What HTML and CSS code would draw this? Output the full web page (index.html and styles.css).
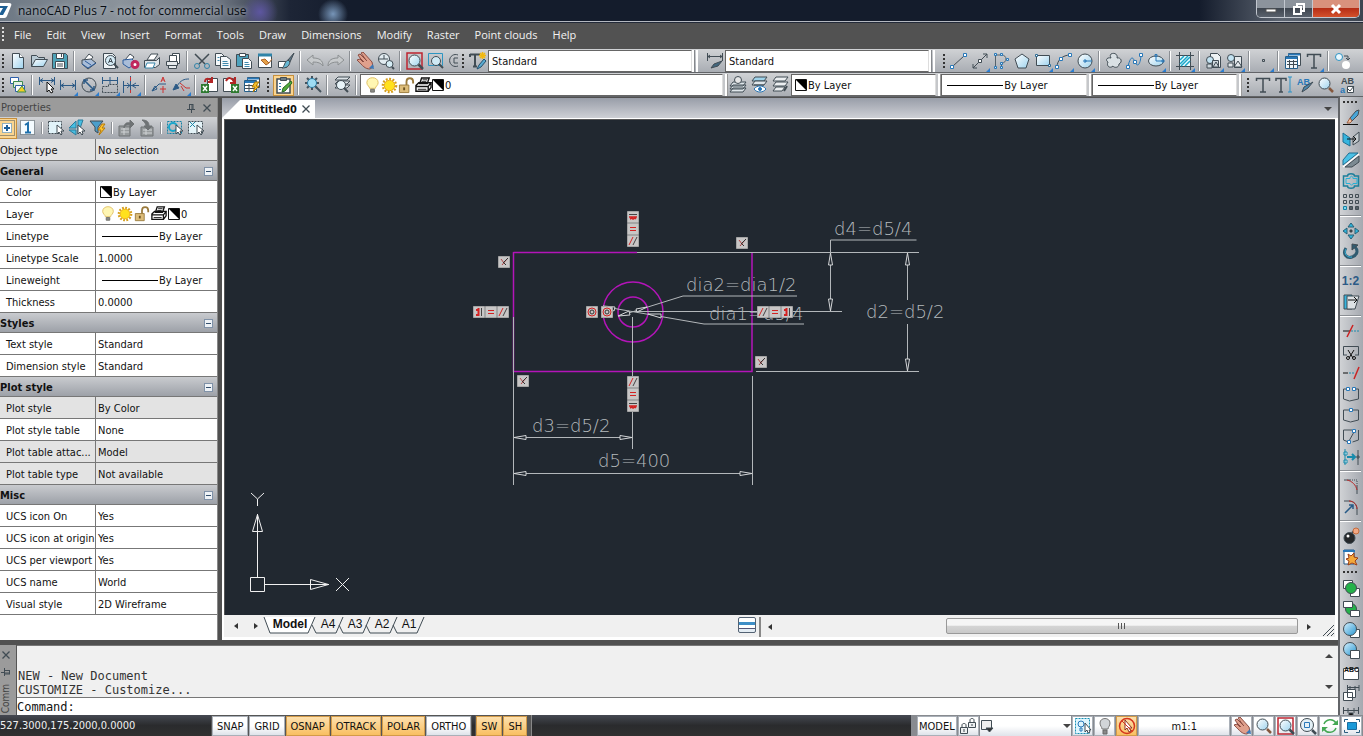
FILE: index.html
```
<!DOCTYPE html>
<html lang="en">
<head>
    <meta charset="UTF-8">
    <meta name="viewport" content="width=device-width, initial-scale=1.0">
    <title>nanoCAD Plus 7</title>
    <link rel="stylesheet" href="styles.css">
</head>
<body>
    <!-- Icon library -->
    <svg class="sprite" aria-hidden="true">
        <defs>
            <linearGradient id="glass" x1="0" y1="0" x2="1" y2="1"><stop offset="0" stop-color="#ffffff"/><stop offset="1" stop-color="#9ed3ee"/></linearGradient>
            <linearGradient id="sky" x1="0" y1="0" x2="1" y2="1"><stop offset="0" stop-color="#d8f2ff"/><stop offset="1" stop-color="#2795cf"/></linearGradient>
        </defs>
        <symbol id="new" viewBox="0 0 18 18"><path fill="url(#glass)" d="M3.5 1.5h7l4 4v11h-11z"/><path fill="#fff" d="M10.5 1.5v4h4"/></symbol>
        <symbol id="open" viewBox="0 0 18 18"><path fill="#b9cad4" d="M1.5 14.5v-11h5l2 2h6v3"/><path fill="url(#glass)" d="M1.5 14.5l4-7h12l-4 7z"/></symbol>
        <symbol id="save" viewBox="0 0 18 18"><path fill="#4fa3b8" d="M1.5 1.5h13l2 2v13h-15z"/><path fill="#fff" d="M5.5 1.5h7v5h-7zM4.500 9.500h9v7h-9z"/><path d="M6 12h6M6 14h6M10.500 2v3"/></symbol>
        <symbol id="print" viewBox="0 0 18 18"><path fill="#fff" d="M4 8L9 2l4 3-4 5z"/><path fill="#a9bdd8" d="M2 8l9-1 5 4-8 6-6-5z"/><path stroke="#2c5c9c" d="M2 12l6 4 8-5M5 9l6 4"/></symbol>
        <symbol id="preview" viewBox="0 0 18 18"><path fill="#eef3f6" d="M2.500 1.500h9l3 3v12h-12z"/><circle cx="9.500" cy="8.500" r="5" fill="#d6ecf6"/><path stroke-width="2" d="M13 12l4 4"/><path d="M7.500 11l2-5 2 5M8 9.500h3"/></symbol>
        <symbol id="plotset" viewBox="0 0 18 18"><path fill="#fff" d="M3 8l5-6 4 3-4 5z"/><path fill="#a9bdd8" stroke="#2c5c9c" d="M1 8l9-1 4 4-7 5-6-4z"/><circle cx="13" cy="12.500" r="3" fill="#fff" stroke="#c0265d" stroke-width="3"/></symbol>
        <symbol id="printer" viewBox="0 0 18 18"><path fill="#fff" d="M4 8L8 2h7l-4 6z"/><path fill="#dfe5e9" d="M1.500 8.500h12l3-3v7l-4 3h-11z"/><path fill="#fff" stroke="#3a89ad" d="M4 11h8l-2 5H2z"/></symbol>
        <symbol id="batch" viewBox="0 0 18 18"><path fill="#fff" d="M8.500 1.500h7v10h-7z"/><path fill="#fff" d="M5.500 3.500h7v10h-7z"/><path fill="#e5e9ec" d="M2.500 9.500h11v4h-11zM4.500 13.500h8v3h-8z"/></symbol>
        <symbol id="cut" viewBox="0 0 18 18"><path stroke-width="1.500" d="M2 2l10 10M16 2L6 12"/><circle cx="4" cy="14" r="2.500" stroke="#2f83a8"/><circle cx="14" cy="14" r="2.500" stroke="#2f83a8"/></symbol>
        <symbol id="copy" viewBox="0 0 18 18"><path fill="#f6f9fb" d="M1.500 1.500h6l3 3v9h-9z"/><path fill="#f6f9fb" d="M6.500 4.500h6l4 3v9h-10z"/><path stroke="#3f89ad" d="M8.500 9.500h5M8.500 11.500h6M8.500 13.500h6M3.500 5.500h2M3.500 8.500h2"/></symbol>
        <symbol id="paste" viewBox="0 0 18 18"><path fill="#4ea2bd" d="M1.500 2.500h12v12h-12z"/><path fill="#fff" d="M4.500 1.500h6v3h-6zM7.500 6.500h6l3 3v7h-9z"/><path stroke="#3f89ad" d="M9.500 10.500h4M9.500 12.500h5M9.500 14.500h5"/></symbol>
        <symbol id="pasteblock" viewBox="0 0 18 18"><path fill="#fff" d="M2.500 2.500h13v13h-13z"/><path stroke="#2f83a8" stroke-width="3" d="M2 3h14"/><path fill="#e5a047" stroke="#a9642b" d="M5 8l5 5 3-2-4-4zM13 11l3-4"/></symbol>
        <symbol id="brush" viewBox="0 0 18 18"><path fill="#fff" d="M1.500 9.500h8v6h-8z"/><path fill="#5c7687" d="M17 1l-6 7 2 2z"/><path fill="#67b7d3" d="M11 8l2 2c-1 5-4 6-8 6 3-2 2-6 6-8z"/></symbol>
        <symbol id="undo" viewBox="0 0 18 18"><path fill="#c7cacc" stroke="#8c9092" d="M1 8l6-5v3c6 0 10 2 10 8-2-3-5-4-10-4v3z"/></symbol>
        <symbol id="redo" viewBox="0 0 18 18"><path fill="#c7cacc" stroke="#8c9092" d="M17 8l-6-5v3C5 6 1 8 1 14c2-3 5-4 10-4v3z"/></symbol>
        <symbol id="hand" viewBox="0 0 18 18"><path fill="#e0a08c" stroke="#8b4d43" d="M1 8l3-1 3 3-5-7 2-1 6 6-5-7 2-1 9 10 1 5-3 2c-5 0-7-3-13-9z"/><path stroke="#8b4d43" d="M8 10l-4-4M11 9L6 4"/><path fill="#3a78b8" stroke="none" d="M13 16l4-4 1 5z"/></symbol>
        <symbol id="zoomrt" viewBox="0 0 18 18"><circle cx="7" cy="7" r="5.500" fill="#e2ecf1"/><path d="M7 3v4h4M2 7h5"/><circle cx="12.500" cy="12" r="3.500" fill="#d6edf5"/><path stroke-width="2" d="M15 15l2 2"/></symbol>
        <symbol id="zoomred" viewBox="0 0 18 18"><path stroke="#bd2430" stroke-width="1.500" d="M1 1h15v16H1z"/><circle cx="8.500" cy="8.500" r="5.500" fill="url(#glass)"/><path stroke-width="2.500" d="M12.500 12.500l4.500 4.500"/></symbol>
        <symbol id="zoomwin" viewBox="0 0 18 18"><path stroke="#2d96c2" d="M1.500 1.500h14v12h-14z"/><circle cx="9" cy="9" r="4.500" fill="#cfe9f4"/><path stroke-width="2" d="M12 12l4 4"/></symbol>
        <symbol id="zoomc" viewBox="0 0 18 18"><path d="M12 3a6 6 0 1 0 0 11M12 6H8v5h4"/></symbol>
        <symbol id="textstyle" viewBox="0 0 18 18"><path stroke-width="2" d="M1 2.500h10M6 3v11M4 14.500h4M1 2v3"/><path fill="#5aaad0" stroke="#24506d" d="M15 7l2 2-5 6-4 2 2-4z"/><path stroke="#f2b90f" stroke-width="1.500" d="M13.500 0v7M10 3.500h7M11 1l5 5M16 1l-5 5"/></symbol>
        <symbol id="dimstyle" viewBox="0 0 18 18"><path d="M1.500 1v8M16.500 1v8M2 4.500h14M4 3L2 4.500 4 6M14 3l2 1.500L14 6"/><path fill="#42677e" d="M16 9l-4 5-7 2 3-4z"/></symbol>
        <symbol id="line" viewBox="0 0 18 18"><path d="M3 14L14 4"/><path fill="#fff" stroke="#2878b9" d="M.5 13.500h3v3h-3zM13.500 1.500h3v3h-3z"/></symbol>
        <symbol id="ray" viewBox="0 0 18 18"><path d="M2 16L16 2M2 12v4h4M12 2h4v4"/><path fill="#fff" d="M7.500 7.500h3v3h-3z"/></symbol>
        <symbol id="pline" viewBox="0 0 18 18"><path stroke="#56636b" d="M3.500 15V3h6c6 0 6 8 0 8v4"/><path fill="#d5edf9" stroke="#2878b9" d="M2.500 1.500h2v2h-2zM8.500 1.500h2v2h-2zM14.500 6.500h2v2h-2zM8.500 10.500h2v2h-2zM2.500 14.500h2v2h-2zM8.500 14.500h2v2h-2z"/></symbol>
        <symbol id="polygon" viewBox="0 0 18 18"><path fill="url(#glass)" d="M9 2l7 5-3 9H5L2 7z"/></symbol>
        <symbol id="rect" viewBox="0 0 18 18"><path fill="url(#glass)" d="M2.500 3.500h13v10h-13z"/><path fill="#fff" stroke="#2e6c95" d="M1.500 2.500h2v2h-2zM14.500 12.500h2v2h-2z"/></symbol>
        <symbol id="arc" viewBox="0 0 18 18"><path d="M2 15C2 8 8 3 15 3"/><path fill="#fff" stroke="#2878b9" d="M.5 13.500h3v3h-3zM4.500 5.500h3v3h-3zM13.500 1.500h3v3h-3z"/></symbol>
        <symbol id="circle" viewBox="0 0 18 18"><circle cx="9" cy="9" r="7" fill="url(#glass)"/><path stroke="#2878b9" d="M9 9h7M8 8h2v2H8z"/></symbol>
        <symbol id="cloud" viewBox="0 0 18 18"><path fill="#d9e0e4" d="M6 2c4-2 7 1 6 4 4-1 6 4 2 6 0 4-5 4-6 2-3 3-7 0-5-4-3-2-1-5 3-4-1-2-1-3 0-4z"/></symbol>
        <symbol id="spline" viewBox="0 0 18 18"><path stroke="#2878b9" d="M2 14c3-11 5-9 7-4s5 4 6-6"/><path fill="#fff" stroke="#2878b9" d="M.5 13.500h3v3h-3zM7.500 8.500h3v3h-3zM13.500 1.500h3v3h-3z"/></symbol>
        <symbol id="ellipse" viewBox="0 0 18 18"><ellipse cx="9" cy="9" rx="7.500" ry="5" fill="url(#glass)"/><path stroke="#2878b9" d="M9 4v5h7M8 2.500h2v2H8zM15 8h2v2h-2z"/></symbol>
        <symbol id="hatch" viewBox="0 0 18 18"><path fill="#e9fbff" d="M3.500 3.500h11v11h-11zM3.500 0v18M14.500 0v18M0 3.500h18M0 14.500h18"/><path stroke="#1aa6c9" stroke-width="1.500" d="M4 8l4-4M4 12l8-8M5 14l9-9M9 14l5-5"/></symbol>
        <symbol id="blockins" viewBox="0 0 18 18"><path fill="#eef2f4" d="M5.500 1.500h7l3 3v11h-10z"/><circle cx="5" cy="8" r="3.500" fill="#c3e3f2"/><path fill="#cfd8dd" d="M7.500 8.500h6v7h-6zM2 12h5v4H2zM8 15l3-5 3 5z"/></symbol>
        <symbol id="blockdef" viewBox="0 0 18 18"><circle cx="5" cy="6" r="3.500" fill="#c3e3f2"/><path fill="#e4e9ec" d="M8.500 4.500h7v11h-7zM2 11h5v4H2zM8 15l4-6 4 6z"/></symbol>
        <symbol id="point" viewBox="0 0 18 18"><path d="M7.500 7.500h2v2h-2z"/></symbol>
        <symbol id="table" viewBox="0 0 18 18"><path fill="#fff" d="M4.500 1.500h12v12h-12z"/><path fill="#f2f7fa" stroke="#245e89" d="M1.500 4.500h12v12h-12z"/><path stroke="#2878b9" stroke-width="2" d="M4 2.500h12M2 6h11"/><path d="M3 9.500h10M3 12.500h10M5.500 8v8M9.500 8v8"/></symbol>
        <symbol id="text" viewBox="0 0 18 18"><path stroke-width="1.500" d="M2.500 5V2.500h13V5M9 2.500V16M6 16h6"/></symbol>
        <symbol id="swap" viewBox="0 0 18 18"><circle cx="5" cy="5" r="3.500" fill="#e9f8ff" stroke="#2e93c3"/><circle cx="12" cy="13" r="4" fill="#fff" stroke="none"/><path d="M10 4h4v4M12 6l2 2 2-2"/></symbol>
        <symbol id="layers" viewBox="0 0 18 18"><path fill="#fff" stroke="#2d5faa" d="M1.500 1.500h8v6h-8z"/><path fill="#e4f1e4" stroke="#3b8b50" d="M4.500 5.500h9v6h-9z"/><path fill="#fff" stroke="#2d5faa" d="M6.500 9.500h9v6h-9z"/><path fill="#f4d024" stroke="#3b8b50" d="M8 16l5-6 4 6z"/></symbol>
        <symbol id="dimauto" viewBox="0 0 18 18"><path stroke="#2c5a86" d="M1.500 1v8M16.500 1v8M2 4.500h14M5 2.500l-3 2 3 2M13 2.500l3 2-3 2"/><path fill="#fff" stroke="#111" d="M9 6v10l2-2 2 3 2-1-2-3h3z"/></symbol>
        <symbol id="dimlin" viewBox="0 0 18 18"><path stroke="#2c5a86" d="M1.500 4v10M16.500 4v10M2 9.500h14M5 7.500l-3 2 3 2M13 7.500l3 2-3 2"/></symbol>
        <symbol id="dimdia" viewBox="0 0 18 18"><circle cx="9" cy="9" r="7"/><path stroke="#2c5a86" stroke-width="1.500" d="M4 4l10 10M4 8V4h4M10 14h4v-4"/></symbol>
        <symbol id="dimcont" viewBox="0 0 18 18"><path stroke="#2c5a86" d="M1.500 1v7M9 1v7M16.500 1v7M2 4.500h14"/><path stroke-dasharray="2 1" d="M1.500 16.500v-6h6v-2h9v8z"/></symbol>
        <symbol id="dimbrk" viewBox="0 0 18 18"><path stroke="#2c5a86" d="M8.500 0v17M1.500 5v12M1 9.500h16M5 7l3 2.500L5 12M14 7l-4 2.500 4 2.500"/><path stroke="#c33" d="M8.500 1v4M8.500 14v3"/></symbol>
        <symbol id="leadera" viewBox="0 0 18 18"><path stroke="#2c5a86" d="M1 15l7-7h7M1 15l5-2-2-3z"/><path stroke="#c33" d="M10 6l2-5 2 5M11 4h2M12 10v7M9 13h6"/></symbol>
        <symbol id="leader" viewBox="0 0 18 18"><path fill="#2c5a86" stroke="#2c5a86" d="M1 14l6-2-3-4z"/><path stroke="#2c5a86" d="M5 10c4-6 7-7 12-7"/><path stroke="#c33" d="M8 7l6 5h4M9 10l3 5"/></symbol>
        <symbol id="xlsin" viewBox="0 0 18 18"><path fill="#fff" d="M6.500 2.500h10v13h-10z"/><path fill="#2e7a30" stroke="none" d="M0 8h8v9H0z"/><path stroke="#fff" stroke-width="1.500" d="M2 10l4 5M6 10l-4 5"/><path stroke="#b32626" stroke-width="2" d="M4 6c0-4 3-4 7-1M11 1v5H7"/></symbol>
        <symbol id="xlsout" viewBox="0 0 18 18"><path fill="#fff" d="M1.500 2.500h10v13h-10z"/><path fill="#2e7a30" stroke="none" d="M9 8h8v9H9z"/><path stroke="#fff" stroke-width="1.500" d="M11 10l4 5M15 10l-4 5"/><path stroke="#b32626" stroke-width="2" d="M4 5c2-4 6-4 8 1M13 1v6H8"/></symbol>
        <symbol id="tableedit" viewBox="0 0 18 18"><path fill="#fff" d="M4.500 1.500h12v10h-12z"/><path fill="#fff" stroke="#245e89" d="M1.500 4.500h12v11h-12z"/><path stroke="#2878b9" stroke-width="2" d="M4 2.500h12M2 6h11"/><path d="M2 9.500h11M2 12.500h11M6 8v7"/><path fill="#f6c12a" stroke="#a87408" d="M12 6l-3 5h3l-2 5 6-6h-3l3-4z"/></symbol>
        <symbol id="clipboard" viewBox="0 0 18 18"><path fill="#fff" stroke-width="1.500" d="M2 3h13v14H2z"/><path fill="#6a7a84" d="M5.500 1.500h6v3h-6z"/><path stroke="#2c79b0" d="M4 7.500h2M4 10.500h2M4 13.500h2"/><path fill="#52ab3f" stroke="#2a6a20" d="M16 5l1 2-7 8-3 1 1-4z"/></symbol>
        <symbol id="gear" viewBox="0 0 18 18"><path stroke="#44525c" stroke-width="2" d="M8 0v14M1 7h14M3 2l10 10M13 2L3 12"/><circle cx="8" cy="7" r="4.500" fill="#9edcf3" stroke="#2c79a0"/><path stroke="#44525c" stroke-width="2" d="M12 11l5 5"/></symbol>
        <symbol id="layermag" viewBox="0 0 18 18"><path fill="#dde3e7" d="M5 1h12l-3 3H2zM5 5h12l-3 3H2zM5 9h12l-3 3H2z"/><circle cx="8" cy="9" r="4.500" fill="#e8f4f9"/><path stroke-width="2" d="M11 12l4 4"/></symbol>
        <symbol id="layprev" viewBox="0 0 18 18"><path fill="#dfe6ea" d="M4 12h13l-3 4H1zM4 9h13l-3 4H1zM4 6h13l-3 4H1z"/><circle cx="9" cy="4" r="3.500" fill="#e6e6e6"/></symbol>
        <symbol id="layiso" viewBox="0 0 18 18"><path fill="#9fd3ea" d="M5 1h12l-3 4H2z"/><path fill="#dfe6ea" d="M5 5h12l-3 4H2zM4 9h10"/><path fill="#fff" stroke="#2674b5" d="M4 13c3-4 9-4 12 0-3 4-9 4-12 0z"/><circle cx="10" cy="13" r="1.500" fill="#2674b5" stroke="#2674b5"/></symbol>
        <symbol id="layst" viewBox="0 0 18 18"><path fill="#eceff1" d="M5 1h12l-3 4H2zM5 6h12l-3 4H2zM5 11h9l-3 4H2z"/><path stroke-width="2" d="M13 15l3-5"/></symbol>
        <symbol id="bulb" viewBox="0 0 18 18"><path fill="#fff6b3" stroke="#dfbf62" d="M6 12c0-2-3-3-3-6 0-7 12-7 12 0 0 3-3 4-3 6z"/><path fill="#8c8c86" stroke="#6d6d68" d="M7 13h4v3H7z"/></symbol>
        <symbol id="sun" viewBox="0 0 18 18"><circle cx="9" cy="9" r="7" stroke="#d59f1d" stroke-width="2.500" stroke-dasharray="2 1.600"/><circle cx="9" cy="9" r="5.500" fill="#ffe11c" stroke="#eba913"/></symbol>
        <symbol id="lock" viewBox="0 0 18 18"><path stroke="#9a7a3c" stroke-width="2" d="M9 9V5c0-5 7-5 7 0v2"/><path fill="#dcbc79" stroke="#9a7a3c" d="M1.500 8.500h10v8h-10z"/><path stroke="#6b5220" stroke-width="2" d="M6.500 11v3"/></symbol>
        <symbol id="plot" viewBox="0 0 18 18"><path fill="#fff" stroke="#111" stroke-width="1.500" d="M5 7l2-6h8l-2 6zM1 9l3-3h13l-3 4v5H1zM14 15l3-4V6M1 10h13"/><path stroke="#111" d="M8 3h5M7 5h5M3 13h9"/></symbol>
        <symbol id="swatch" viewBox="0 0 12 12"><path fill="#fff" stroke="#111" d="M.5.500h11v11H.5z"/><path fill="#000" stroke="none" d="M1 1h10v10z"/></symbol>
        <symbol id="textcur" viewBox="0 0 18 18"><path stroke-width="1.500" d="M1 5V2.500h10V5M6 2.500V16M4 16h4"/><path stroke="#2b93c8" d="M15 1v15M13 1h4M13 16h4"/></symbol>
        <symbol id="mag" viewBox="0 0 18 18"><circle cx="7.500" cy="7.500" r="5.500" fill="url(#glass)"/><path stroke="#85573d" stroke-width="2.500" d="M12 12l4 4"/></symbol>
        <symbol id="plusbox" viewBox="0 0 18 18"><path stroke-dasharray="1 1" d="M1.500 1.500h15v15h-15z"/><path fill="#fff" stroke="#2878b9" stroke-dasharray="1 1" d="M4.500 4.500h9v9h-9z"/><path stroke="#1d5f99" stroke-width="2" d="M9 6v6M6 9h6"/></symbol>
        <symbol id="onebox" viewBox="0 0 18 18"><path fill="#f4fbff" stroke-dasharray="1 1" d="M1.500 1.500h14v14h-14z"/><path stroke="#1e70ac" stroke-width="2" d="M6 6l3-2v9M6 13.500h6"/></symbol>
        <symbol id="selbox" viewBox="0 0 18 18"><path fill="#e2f4fa" stroke-dasharray="2 1" d="M1.500 2.500h13v12h-13z"/><path fill="#fff" d="M10 6v9l2-2 2 3 1-1-1-3h3z"/></symbol>
        <symbol id="selsim" viewBox="0 0 18 18"><path fill="#47bfe2" stroke="#2c7c9c" d="M1 9l7-7v7zM10 1v14l5-14zM1 11h7v5z"/><path fill="#fff" d="M10 6v9l2-2 2 3 1-1-1-3h3z"/></symbol>
        <symbol id="filter" viewBox="0 0 18 18"><path fill="#4a9fcb" d="M1 2h13L9 8v6l-3-2V8z"/><path fill="#ffc52e" stroke="#b57a08" d="M13 5l-4 6h3l-2 5 6-7h-3l3-4z"/></symbol>
        <symbol id="exp" viewBox="0 0 18 18"><path fill="#969a9c" stroke="#6f7375" d="M2 7h11v10H2z"/><path stroke="#d0d3d5" d="M4 10h8M4 13h8M7 9v7"/><path fill="#6f7375" stroke="#6f7375" d="M7 9c0-4 2-6 6-5V1l4 4-4 4V6c-3-1-5 0-6 3z"/></symbol>
        <symbol id="imp" viewBox="0 0 18 18"><path fill="#969a9c" stroke="#6f7375" d="M3 8h12v9H3z"/><path stroke="#d0d3d5" d="M5 11h9M5 14h9M8 10v6"/><path fill="#6f7375" stroke="#6f7375" d="M4 1c5 0 7 2 7 6h3l-4 4-4-4h2c0-3-2-4-4-6z"/></symbol>
        <symbol id="selin" viewBox="0 0 18 18"><path stroke="#1682a6" d="M1.500 2.500h14v12h-14z" stroke-dasharray="2 1"/><circle cx="7" cy="8" r="4" stroke="#1ba6cb" stroke-width="2"/><path fill="#fff" d="M10 6v9l2-2 2 3 1-1-1-3h3z"/></symbol>
        <symbol id="selx" viewBox="0 0 18 18"><path fill="#e4f3f8" stroke-dasharray="2 1" d="M1.500 2.500h14v12h-14z"/><path stroke="#1f85a4" d="M3 3l5 5M8 3L3 8"/><path fill="#fff" d="M10 6v9l2-2 2 3 1-1-1-3h3z"/></symbol>
        <symbol id="erase" viewBox="0 0 18 18"><path stroke="#111" d="M1 15.500h15"/><path fill="#47a5d8" d="M8 9l6-7 3-1-1 5-6 6z"/><path fill="#f1c0a0" stroke="#9b6045" d="M8 9l2 3-2 2H5z"/></symbol>
        <symbol id="mirrorc" viewBox="0 0 18 18"><path fill="#35b5df" stroke="#216f91" d="M1 3l7 5v8l-7-4z"/><path fill="#c3c9cd" d="M17 2l-6 5v8l6-4z"/><path stroke="#111" d="M5 9h9M11 6l3 3-3 3"/></symbol>
        <symbol id="mirror" viewBox="0 0 18 18"><path fill="#4cc1e6" stroke="#216f91" d="M7 2h9L1 14V9z"/><path fill="#7c8a92" d="M17 5v6l-7 5H3z"/><path stroke="#fff" stroke-width="1.500" d="M1 16L17 3"/></symbol>
        <symbol id="offset" viewBox="0 0 18 18"><path stroke="#1d7f9b" stroke-width="1.500" d="M1.500 4h4c0-3 7-3 7 0h4v10h-4c0 3-7 3-7 0h-4z"/><path d="M4 6.500h4c0-3 3-3 3 0h4v5h-4c0 2-3 2-3 0H4z" stroke="#23b3d9"/></symbol>
        <symbol id="array" viewBox="0 0 18 18"><path d="M1.500 1.500h3v3h-3zM7.500 1.500h3v3h-3zM13.500 1.500h3v3h-3zM1.500 7.500h3v3h-3zM7.500 7.500h3v3h-3zM13.500 7.500h3v3h-3z"/><path fill="#555f66" d="M7.500 13.500h3v3h-3zM13.500 13.500h3v3h-3z"/><path fill="#7ed8f1" stroke="#1682a6" d="M1.500 13.500h3v3h-3z"/></symbol>
        <symbol id="move" viewBox="0 0 18 18"><path fill="#2cb5de" stroke="#2b6075" d="M9 1l3 4H6zM9 17l3-4H6zM1 9l4-3v6zM17 9l-4-3v6z"/><path d="M8 8h2v2H8z" fill="#333"/></symbol>
        <symbol id="rotate" viewBox="0 0 18 18"><path stroke="#315b70" stroke-width="3" d="M4 5c-4 6 1 11 6 9 6-2 6-7 3-10"/><path fill="#315b70" d="M10 1v6l6-5z"/><path stroke="#38b5dd" d="M4 6c-3 5 2 9 6 8"/></symbol>
        <symbol id="stretch" viewBox="0 0 18 18"><path fill="#35b5df" d="M2 2h8v14H2z"/><path fill="#dde2e5" d="M5 3h12l-4 13H5z"/><path stroke="#111" d="M6 7h8M12 4l3 3-3 3"/></symbol>
        <symbol id="trim" viewBox="0 0 18 18"><path d="M1 9h7" stroke="#111"/><path stroke="#1d8aad" stroke-dasharray="2 1" d="M9 9h8"/><path stroke="#c22" stroke-width="1.500" d="M5 15l6-12"/></symbol>
        <symbol id="scissor" viewBox="0 0 18 18"><path d="M1.500 12V3.500h15V12M1 12h4M13 12h4"/><path stroke="#111" d="M6 7l5 8M12 7l-5 8"/><circle cx="6" cy="15" r="1.500" stroke="#111"/><circle cx="12" cy="15" r="1.500" stroke="#111"/></symbol>
        <symbol id="extend" viewBox="0 0 18 18"><path stroke="#111" d="M1 9h5"/><path stroke="#1d8aad" stroke-dasharray="2 1" d="M7 9h6"/><path stroke="#c22" stroke-width="1.500" d="M12 15l5-12"/></symbol>
        <symbol id="brk" viewBox="0 0 18 18"><path d="M4 4H1.500v10l6 2 9-2V4H14"/><path fill="#fff" stroke="#2878b9" d="M4.500 2.500h3v3h-3zM10.500 2.500h3v3h-3z"/></symbol>
        <symbol id="brkpt" viewBox="0 0 18 18"><path d="M1.500 4h15v10l-8 2-7-2z"/><path fill="#fff" stroke="#2878b9" d="M7.500 2.500h3v3h-3z"/></symbol>
        <symbol id="join" viewBox="0 0 18 18"><path d="M10 3H1.500v10l5 2M16.500 3v10l-6 2M7 14l5-9"/><path fill="#fff" stroke="#2878b9" d="M5.500 13.500h3v3h-3zM10.500 2.500h3v3h-3z"/></symbol>
        <symbol id="align" viewBox="0 0 18 18"><path stroke="#168aab" d="M3 1v16M2 4h3v3H2zM2 12h3v3H2z" fill="#fff"/><path stroke="#168aab" stroke-width="2" d="M5 9h8M10 6l3 3-3 3"/><path d="M16 2v15M15 8h2v2h-2z"/></symbol>
        <symbol id="chamfer" viewBox="0 0 18 18"><path d="M2 3h6M15 9v8"/><path stroke-dasharray="1 1" d="M8 3h7v6"/><path stroke="#b92929" d="M5 3c5 1 9 5 10 10"/></symbol>
        <symbol id="fillet" viewBox="0 0 18 18"><path d="M2 3h5c5 0 8 4 8 8v6"/><path stroke="#b92929" d="M7 3c5 0 8 4 8 8"/><path stroke="#275b88" stroke-width="1.500" d="M3 15l8-8M7 7h4v4"/></symbol>
        <symbol id="bomb" viewBox="0 0 18 18"><circle cx="7.500" cy="11" r="5.500" fill="#25282a"/><path stroke-width="2" d="M10 6l3-3"/><circle cx="14" cy="4" r="3" fill="#f2a884" stroke="#c46b3c"/><circle cx="6" cy="9" r="1.500" fill="#fff" stroke="none"/></symbol>
        <symbol id="burst" viewBox="0 0 18 18"><path fill="#fff" stroke="#275b88" d="M2 2h10v14H2z"/><path stroke="#2878b9" stroke-width="2" d="M1 3h12"/><path fill="#f3a93b" stroke="#9a3d18" d="M6 6l3 2 3-3v4l4 1-3 3 2 4-5-2-4 2 1-4-3-2 3-1z"/></symbol>
        <symbol id="front" viewBox="0 0 18 18"><path fill="#fff" d="M1.500 1.500h9v8h-9zM8.500 9.500h9v8h-9z"/><circle cx="9" cy="9" r="5.500" fill="#24b24a"/></symbol>
        <symbol id="back" viewBox="0 0 18 18"><circle cx="9" cy="9" r="5.500" fill="#24b24a"/><path fill="#fff" d="M1.500 1.500h9v6h-9zM8.500 10.500h9v6h-9z"/></symbol>
        <symbol id="above" viewBox="0 0 18 18"><path fill="#fff" d="M8.500 8.500h9v8h-9z"/><circle cx="8" cy="8" r="6.500" fill="url(#sky)"/></symbol>
        <symbol id="under" viewBox="0 0 18 18"><circle cx="8" cy="7" r="6.500" fill="url(#sky)"/><path fill="#fff" d="M8.500 8.500h9v8h-9z"/></symbol>
        <symbol id="dimfront" viewBox="0 0 18 18"><path d="M5 3.500h12M5.500 1v6M17 1v6M8 2v3M13 2v3"/><path fill="#fff" d="M1.500 8.500h9v8h-9zM5.500 5.500h8v8h-8z"/></symbol>
        <symbol id="dimblk" viewBox="0 0 18 18"><path d="M1 5.500h16M1.500 2v7M16.500 2v7M6 3v5M12 3v5"/><path fill="#111" d="M7 8h4v4H7z"/></symbol>
        <symbol id="locks" viewBox="0 0 18 18"><path fill="#eef0f1" d="M9.500 5.500h7v5h-7zM1.500 10.500h7v6h-7z"/><path d="M11 5V3c0-2 4-2 4 0v2M3 10V8c0-2 4-2 4 0v2M5 12v3M13 7v2"/></symbol>
        <symbol id="dynin" viewBox="0 0 18 18"><path stroke="#1590b5" stroke-dasharray="2 1" fill="#dff5fd" d="M1.500 1.500h14v15h-14z"/><circle cx="7" cy="7" r="3" stroke="#2878b9"/><path stroke="#2878b9" d="M6 11h2v3H6z"/><path fill="#fff" d="M11 6v9l2-2 1 3 2-1-1-2h2z"/></symbol>
        <symbol id="bulboff" viewBox="0 0 18 18"><path fill="#d2d5d8" stroke="#777" d="M6 12c0-2-2-3-2-6 0-6 10-6 10 0 0 3-2 4-2 6z"/><path fill="#888" stroke="#666" d="M7 13h4v4H7z"/></symbol>
        <symbol id="nosel" viewBox="0 0 18 18"><circle cx="9" cy="9" r="7.500" stroke="#d5341c" stroke-width="1.500"/><path fill="#fff" stroke="#8c3322" d="M7 3v10l2-2 2 4 2-1-2-3h3z"/><path stroke="#d5341c" d="M4 4l10 10"/></symbol>
        <symbol id="zoomsheet" viewBox="0 0 18 18"><circle cx="8" cy="8" r="6.500" fill="#e3f0f6"/><path stroke="#2878b9" d="M5.500 5.500h5v5h-5z"/><path stroke-width="2.500" d="M13 13l4 4"/></symbol>
        <symbol id="regen" viewBox="0 0 18 18"><path stroke="#45a854" stroke-width="1.500" d="M3 7c2-5 9-6 12-1M15 11c-2 5-9 6-12 1"/><path fill="#45a854" stroke="none" d="M11 8h6V3zM7 10H1v5z"/></symbol>
        <symbol id="fullscr" viewBox="0 0 18 18"><path fill="#1b9ad8" stroke="#1a6ea0" d="M4.500 5.500h9v7h-9z"/><path stroke="#2b5d80" d="M1.500 5V2.500H5M13 2.500h3.500V5M16.500 13v2.500H13M5 15.500H1.500V13"/></symbol>
        <symbol id="pin" viewBox="0 0 10 10"><path d="M3.500 1v5M7 1v5M3 1.500h4M1 6.500h8M5.500 6.500V10M6 1v5"/></symbol>
        <symbol id="close" viewBox="0 0 10 10"><path stroke-width="1.300" d="M1.500 1.500l7 7M8.500 1.500l-7 7"/></symbol>
        <!-- geometric constraint markers -->
        <symbol id="c-perp" viewBox="0 0 12 12"><path class="marker" d="M.5.500h11v11H.5z"/><path stroke="#b24545" d="M3 3l3 4M4 9l5-6"/><path stroke="#333" d="M5 6l3 3M6 6l4-4"/></symbol>
        <symbol id="c-par" viewBox="0 0 12 12"><path class="marker" d="M.5.500h11v11H.5z"/><path stroke="#d32222" d="M2 10l4-8"/><path stroke="#444" d="M6 10l4-8"/></symbol>
        <symbol id="c-eq" viewBox="0 0 12 12"><path class="marker" d="M.5.500h11v11H.5z"/><path stroke="#d32222" d="M3 4.500h6M3 7.500h6"/></symbol>
        <symbol id="c-hor" viewBox="0 0 12 12"><path class="marker" d="M.5.500h11v11H.5z"/><path stroke="#444" d="M2 3.500h8"/><path stroke="#d32222" stroke-width="1.500" d="M2 6h8M3 8l2-1 1 1 2-1 1 1"/></symbol>
        <symbol id="c-ver" viewBox="0 0 12 12"><path class="marker" d="M.5.500h11v11H.5z"/><path stroke="#444" d="M8.500 2v8"/><path stroke="#d32222" stroke-width="2" d="M5.500 2v8M3 4h2M3 9h2"/></symbol>
        <symbol id="c-con" viewBox="0 0 12 12"><path class="marker" d="M.5.500h11v11H.5z"/><circle cx="6" cy="6" r="4" stroke="#d32222"/><circle cx="6" cy="6" r="2" stroke="#333"/></symbol>
    </svg>

    <header class="titlebar">
        <svg class="logo" viewBox="0 0 12 18"><path fill="#fff" stroke="none" d="M0 3h9c2 0 3 1 2 3L7 16c-1 2-2 2-4 2H0z"/><path fill="#1e5f94" stroke="none" d="M0 6h8l-5 9H0v-2l3-5H0z"/></svg>
        <h1>nanoCAD Plus 7 - not for commercial use</h1>
        <div class="window-buttons">
            <button aria-label="Minimize"><svg viewBox="0 0 12 12"><path fill="#fff" stroke="#555" d="M1 6h10v3H1z"/></svg></button>
            <button aria-label="Restore"><svg viewBox="0 0 12 12"><path stroke="#fff" stroke-width="2" d="M4 3V1h7v7H9M1 4h7v7H1z"/></svg></button>
            <button class="close" aria-label="Close"><svg viewBox="0 0 12 12"><path stroke="#fff" stroke-width="3" d="M2 2l8 8M10 2l-8 8"/></svg></button>
        </div>
    </header>

    <nav class="menu">
        <span class="grip"></span>
        <button>File</button><button>Edit</button><button>View</button><button>Insert</button><button>Format</button><button>Tools</button><button>Draw</button><button>Dimensions</button><button>Modify</button><button>Raster</button><button>Point clouds</button><button>Help</button>
    </nav>

    <!-- Standard, styles and draw toolbars -->
    <div class="toolbar">
        <span class="grip"></span>
        <button aria-label="New"><svg><use href="#new"/></svg></button>
        <button aria-label="Open"><svg><use href="#open"/></svg></button>
        <button aria-label="Save"><svg><use href="#save"/></svg></button>
        <i class="sep"></i>
        <button aria-label="Print"><svg><use href="#print"/></svg></button>
        <button aria-label="Print preview"><svg><use href="#preview"/></svg></button>
        <button aria-label="Plot settings"><svg><use href="#plotset"/></svg></button>
        <button aria-label="Page setup"><svg><use href="#printer"/></svg></button>
        <button aria-label="Batch print"><svg><use href="#batch"/></svg></button>
        <i class="sep"></i>
        <button aria-label="Cut"><svg><use href="#cut"/></svg></button>
        <button aria-label="Copy"><svg><use href="#copy"/></svg></button>
        <button aria-label="Paste"><svg><use href="#paste"/></svg></button>
        <button aria-label="Paste as block"><svg><use href="#pasteblock"/></svg></button>
        <button aria-label="Match properties"><svg><use href="#brush"/></svg></button>
        <i class="sep"></i>
        <button aria-label="Undo"><svg><use href="#undo"/></svg></button>
        <button aria-label="Redo"><svg><use href="#redo"/></svg></button>
        <i class="sep"></i>
        <button aria-label="Pan"><svg><use href="#hand"/></svg></button>
        <button aria-label="Zoom realtime"><svg><use href="#zoomrt"/></svg></button>
        <i class="sep"></i>
        <button aria-label="Zoom all"><svg><use href="#zoomred"/></svg></button>
        <button aria-label="Zoom window"><svg><use href="#zoomwin"/></svg></button>
        <button class="cut-off" aria-label="Zoom center"><svg><use href="#zoomc"/></svg></button>
        <span class="grip"></span>
        <button aria-label="Text style"><svg><use href="#textstyle"/></svg></button>
        <div class="combo"><select aria-label="Text style name"><option>Standard</option></select></div>
        <i class="edge"></i>
        <button aria-label="Dimension style"><svg><use href="#dimstyle"/></svg></button>
        <div class="combo"><select aria-label="Dimension style name"><option>Standard</option></select></div>
        <i class="edge"></i>
        <span class="grip"></span>
        <button aria-label="Line"><svg><use href="#line"/></svg></button>
        <button class="fly" aria-label="Construction line"><svg><use href="#ray"/></svg></button>
        <button aria-label="Polyline"><svg><use href="#pline"/></svg></button>
        <button aria-label="Polygon"><svg><use href="#polygon"/></svg></button>
        <button class="fly" aria-label="Rectangle"><svg><use href="#rect"/></svg></button>
        <button class="fly" aria-label="Arc"><svg><use href="#arc"/></svg></button>
        <button class="fly" aria-label="Circle"><svg><use href="#circle"/></svg></button>
        <i class="sep"></i>
        <button aria-label="Revision cloud"><svg><use href="#cloud"/></svg></button>
        <button aria-label="Spline"><svg><use href="#spline"/></svg></button>
        <button class="fly" aria-label="Ellipse"><svg><use href="#ellipse"/></svg></button>
        <i class="sep"></i>
        <button class="fly" aria-label="Hatch"><svg><use href="#hatch"/></svg></button>
        <i class="sep"></i>
        <button class="fly" aria-label="Insert block"><svg><use href="#blockins"/></svg></button>
        <button class="fly" aria-label="Create block"><svg><use href="#blockdef"/></svg></button>
        <i class="sep"></i>
        <button class="fly" aria-label="Point"><svg><use href="#point"/></svg></button>
        <i class="sep"></i>
        <button aria-label="Table"><svg><use href="#table"/></svg></button>
        <button class="fly" aria-label="Text"><svg><use href="#text"/></svg></button>
        <i class="sep"></i>
        <button aria-label="Draw order"><svg><use href="#swap"/></svg></button>
        <span class="tail"></span>
    </div>

    <!-- Dimension, layer and property toolbars -->
    <div class="toolbar">
        <span class="grip"></span>
        <button aria-label="Layers"><svg><use href="#layers"/></svg></button>
        <i class="sep"></i>
        <button aria-label="Smart dimension"><svg><use href="#dimauto"/></svg></button>
        <button class="fly" aria-label="Linear dimension"><svg><use href="#dimlin"/></svg></button>
        <button class="fly" aria-label="Diameter dimension"><svg><use href="#dimdia"/></svg></button>
        <button class="fly" aria-label="Continue dimension"><svg><use href="#dimcont"/></svg></button>
        <button class="fly" aria-label="Dimension break"><svg><use href="#dimbrk"/></svg></button>
        <i class="sep"></i>
        <button aria-label="Multileader"><svg><use href="#leadera"/></svg></button>
        <button class="fly" aria-label="Leader"><svg><use href="#leader"/></svg></button>
        <i class="sep"></i>
        <button aria-label="Import table"><svg><use href="#xlsin"/></svg></button>
        <button aria-label="Export table"><svg><use href="#xlsout"/></svg></button>
        <button aria-label="Edit table"><svg><use href="#tableedit"/></svg></button>
        <span class="grip wide"></span>
        <button class="active" aria-label="Properties"><svg><use href="#clipboard"/></svg></button>
        <i class="sep"></i>
        <button aria-label="Quick select"><svg><use href="#gear"/></svg></button>
        <i class="sep"></i>
        <button aria-label="Layer manager"><svg><use href="#layermag"/></svg></button>
        <i class="sep"></i>
        <div class="combo layer">
            <svg><use href="#bulb"/></svg><svg><use href="#sun"/></svg><svg><use href="#lock"/></svg><svg><use href="#plot"/></svg><svg class="swatch"><use href="#swatch"/></svg>
            <select aria-label="Layer"><option>0</option></select>
        </div>
        <i class="edge slim"></i>
        <button aria-label="Layer previous"><svg><use href="#layprev"/></svg></button>
        <button aria-label="Layer isolate"><svg><use href="#layiso"/></svg></button>
        <button aria-label="Layer states"><svg><use href="#layst"/></svg></button>
        <div class="combo color"><svg class="swatch"><use href="#swatch"/></svg><select aria-label="Color"><option>By Layer</option></select></div>
        <i class="edge slim"></i>
        <div class="combo color"><i class="stroke"></i><select aria-label="Linetype"><option>By Layer</option></select></div>
        <i class="edge slim"></i>
        <div class="combo color"><i class="stroke"></i><select aria-label="Lineweight"><option>By Layer</option></select></div>
        <i class="edge slim"></i>
        <span class="grip wide"></span>
        <button aria-label="Multiline text"><svg><use href="#text"/></svg></button>
        <button aria-label="Single line text"><svg><use href="#textcur"/></svg></button>
        <button aria-label="Edit text"><svg viewBox="0 0 18 18"><text class="glyph blue" x="1" y="9">AB</text><path fill="#4b87ae" d="M17 6l-5 6-6 4 2-5z"/></svg></button>
        <button aria-label="Find text"><svg><use href="#mag"/></svg></button>
        <button aria-label="Spell check"><svg viewBox="0 0 18 18"><text class="glyph" x="3" y="8">AB</text><text class="glyph blue" x="2" y="17">a</text><path fill="#fff" d="M9.500 10.500h6v6h-6z"/><path d="M10 13l2 2 4-5"/></svg></button>
        <span class="tail short"></span>
    </div>

    <div class="workspace">
        <div class="left">
            <main class="main">
                <!-- Properties panel -->
                <aside class="properties">
                    <div class="panel-title">
                        <h2>Properties</h2>
                        <button aria-label="Pin"><svg><use href="#pin"/></svg></button>
                        <button aria-label="Close panel"><svg><use href="#close"/></svg></button>
                    </div>
                    <div class="panel-tools">
                        <button class="active" aria-label="Add to selection"><svg><use href="#plusbox"/></svg></button>
                        <button aria-label="Single selection"><svg><use href="#onebox"/></svg></button>
                        <i class="sep"></i>
                        <button aria-label="Select objects"><svg><use href="#selbox"/></svg></button>
                        <button aria-label="Select similar"><svg><use href="#selsim"/></svg></button>
                        <button aria-label="Filter"><svg><use href="#filter"/></svg></button>
                        <i class="sep"></i>
                        <button aria-label="Export"><svg><use href="#exp"/></svg></button>
                        <button aria-label="Import"><svg><use href="#imp"/></svg></button>
                        <i class="sep"></i>
                        <button aria-label="Invert selection"><svg><use href="#selin"/></svg></button>
                        <button aria-label="Clear selection"><svg><use href="#selx"/></svg></button>
                    </div>
                    <table>
                        <tr class="locked type"><td>Object type</td><td>No selection</td></tr>
                        <tr class="group"><th colspan="2">General<button aria-label="Collapse General"></button></th></tr>
                        <tr><td>Color</td><td><div class="cell"><svg class="swatch"><use href="#swatch"/></svg>By Layer</div></td></tr>
                        <tr><td>Layer</td><td><div class="cell"><svg><use href="#bulb"/></svg><svg><use href="#sun"/></svg><svg><use href="#lock"/></svg><svg><use href="#plot"/></svg><svg class="swatch"><use href="#swatch"/></svg>0</div></td></tr>
                        <tr><td>Linetype</td><td><div class="cell"><i class="stroke"></i>By Layer</div></td></tr>
                        <tr><td>Linetype Scale</td><td>1.0000</td></tr>
                        <tr><td>Lineweight</td><td><div class="cell"><i class="stroke"></i>By Layer</div></td></tr>
                        <tr><td>Thickness</td><td>0.0000</td></tr>
                        <tr class="group"><th colspan="2">Styles<button aria-label="Collapse Styles"></button></th></tr>
                        <tr><td>Text style</td><td>Standard</td></tr>
                        <tr><td>Dimension style</td><td>Standard</td></tr>
                        <tr class="group"><th colspan="2">Plot style<button aria-label="Collapse Plot style"></button></th></tr>
                        <tr class="locked"><td>Plot style</td><td>By Color</td></tr>
                        <tr><td>Plot style table</td><td>None</td></tr>
                        <tr class="locked"><td>Plot table attac...</td><td>Model</td></tr>
                        <tr class="locked"><td>Plot table type</td><td>Not available</td></tr>
                        <tr class="group"><th colspan="2">Misc<button aria-label="Collapse Misc"></button></th></tr>
                        <tr><td>UCS icon On</td><td>Yes</td></tr>
                        <tr><td>UCS icon at origin</td><td>Yes</td></tr>
                        <tr><td>UCS per viewport</td><td>Yes</td></tr>
                        <tr><td>UCS name</td><td>World</td></tr>
                        <tr><td>Visual style</td><td>2D Wireframe</td></tr>
                    </table>
                </aside>

                <!-- Drawing -->
                <section class="document">
                    <div class="doc-tabs">
                        <div class="doc-tab"><span>Untitled0</span><button aria-label="Close drawing"><svg><use href="#close"/></svg></button></div>
                        <button class="tab-list" aria-label="Drawing list"><i class="arrow down"></i></button>
                    </div>
                    <div class="frame">
                        <svg class="canvas">
                            <!-- part outline -->
                            <g class="part">
                                <path d="M288.500 132v119.500H527V132M288.500 132.500H412"/>
                                <circle cx="408" cy="192" r="30"/>
                                <circle cx="408" cy="192" r="15"/>
                            </g>
                            <!-- extension and dimension lines -->
                            <g class="dims">
                                <path d="M412 132.500h282M531 251.500h163M408 191.500h209M288.500 197v168M407.500 197v132M527.500 256v109"/>
                                <path d="M289 317.500h118M289 353.500h238M682.500 133v47M682.500 204v47M605.500 191v-71h86"/>
                                <path d="M394 196l64-20h114M381 187l98 17h100"/>
                                <path class="heads" d="M289 317.500l12-2v4zM407 317.500l-12-2v4zM289 353.500l12-2v4zM527 353.500l-12-2v4zM682.500 133l-2 12h4zM682.500 251l-2-12h4zM605.500 133l-2 12h4zM605.500 191l-2-12h4zM393 196l11-5 1 4zM422 187l-11 2 1 3zM423 194l13 0v4zM378 186l12 1-1 4z"/>
                            </g>
                            <g class="dim-text">
                                <text x="609" y="115">d4=d5/4</text>
                                <text x="641" y="198">d2=d5/2</text>
                                <text x="307" y="312">d3=d5/2</text>
                                <text x="373" y="347">d5=400</text>
                                <text x="461" y="171">dia2=dia1/2</text>
                                <text x="484" y="200">dia1=d5/4</text>
                            </g>
                            <g class="markers">
                                <use href="#c-hor" x="402" y="91" width="12" height="12"/>
                                <use href="#c-eq" x="402" y="103" width="12" height="12"/>
                                <use href="#c-par" x="402" y="115" width="12" height="12"/>
                                <use href="#c-perp" x="511" y="117" width="12" height="12"/>
                                <use href="#c-perp" x="273" y="136" width="12" height="12"/>
                                <use href="#c-perp" x="292" y="255" width="12" height="12"/>
                                <use href="#c-perp" x="530" y="236" width="12" height="12"/>
                                <use href="#c-ver" x="248" y="186" width="12" height="12"/>
                                <use href="#c-eq" x="260" y="186" width="12" height="12"/>
                                <use href="#c-par" x="272" y="186" width="12" height="12"/>
                                <use href="#c-con" x="361" y="186" width="12" height="12"/>
                                <use href="#c-con" x="376" y="186" width="12" height="12"/>
                                <use href="#c-par" x="532" y="186" width="12" height="12"/>
                                <use href="#c-eq" x="544" y="186" width="12" height="12"/>
                                <use href="#c-ver" x="556" y="186" width="12" height="12"/>
                                <use href="#c-par" x="402" y="256" width="12" height="12"/>
                                <use href="#c-eq" x="402" y="268" width="12" height="12"/>
                                <use href="#c-hor" x="402" y="280" width="12" height="12"/>
                            </g>
                            <!-- UCS icon -->
                            <path class="ucs" d="M25.500 457.500h14v14h-14zM32.500 457v-63M27.500 411.500h10l-5-17zM40 464.500h64M85.500 459.500v10l18-5zM26 373l6.500 6 6.500-6M32.500 379v7M111 458l13 13M124 458l-13 13"/>
                        </svg>
                        <div class="sheet-bar">
                            <button class="step" aria-label="Previous sheet"><i class="arrow left-arrow"></i></button>
                            <button class="step" aria-label="Next sheet"><i class="arrow right-arrow"></i></button>
                            <button class="sheet current"><svg viewBox="0 0 51 17"><path d="M0 0l6 16h38l7-16"/></svg><span>Model</span></button>
                            <button class="sheet"><svg viewBox="0 0 31 17"><path d="M0 8l4 8h20l7-16"/></svg><span>A4</span></button>
                            <button class="sheet"><svg viewBox="0 0 31 17"><path d="M0 8l4 8h20l7-16"/></svg><span>A3</span></button>
                            <button class="sheet"><svg viewBox="0 0 31 17"><path d="M0 8l4 8h20l7-16"/></svg><span>A2</span></button>
                            <button class="sheet"><svg viewBox="0 0 31 17"><path d="M0 8l4 8h20l7-16"/></svg><span>A1</span></button>
                            <span class="sheet-space"><button class="split" aria-label="Split view"></button></span>
                            <div class="scroll">
                                <i class="arrow left-arrow"></i>
                                <div class="track"><div class="thumb"></div></div>
                                <i class="arrow right-arrow"></i>
                                <svg class="resize" viewBox="0 0 14 14"><path d="M2 13L13 2M6 13l7-7M10 13l3-3"/></svg>
                            </div>
                        </div>
                    </div>
                </section>
            </main>

            <!-- Command line -->
            <section class="command">
                <div class="command-side">
                    <button aria-label="Close command line"><svg><use href="#close"/></svg></button>
                    <button class="turned" aria-label="Pin command line"><svg><use href="#pin"/></svg></button>
                    <span>Comm</span>
                </div>
                <div class="command-body">
                    <div class="log">
                        <p>NEW - New Document<br>CUSTOMIZE - Customize...</p>
                        <div class="log-scroll"><i class="arrow up"></i><i class="arrow down"></i></div>
                    </div>
                    <div class="prompt"><label for="cmd">Command:</label><input type="text" id="cmd"></div>
                </div>
            </section>
        </div>

        <!-- Modify toolbar -->
        <div class="side-toolbar">
            <span class="grip"></span>
            <button aria-label="Erase"><svg><use href="#erase"/></svg></button>
            <button aria-label="Copy objects"><svg><use href="#mirrorc"/></svg></button>
            <button aria-label="Mirror"><svg><use href="#mirror"/></svg></button>
            <button aria-label="Offset"><svg><use href="#offset"/></svg></button>
            <button aria-label="Array"><svg><use href="#array"/></svg></button>
            <i class="sep"></i>
            <button aria-label="Move"><svg><use href="#move"/></svg></button>
            <button aria-label="Rotate"><svg><use href="#rotate"/></svg></button>
            <i class="sep"></i>
            <button class="ratio" aria-label="Scale">1:2</button>
            <button aria-label="Stretch"><svg><use href="#stretch"/></svg></button>
            <i class="sep"></i>
            <button aria-label="Trim"><svg><use href="#trim"/></svg></button>
            <button aria-label="Clip"><svg><use href="#scissor"/></svg></button>
            <button aria-label="Extend"><svg><use href="#extend"/></svg></button>
            <button aria-label="Break"><svg><use href="#brk"/></svg></button>
            <button aria-label="Break at point"><svg><use href="#brkpt"/></svg></button>
            <button aria-label="Join"><svg><use href="#join"/></svg></button>
            <button aria-label="Align"><svg><use href="#align"/></svg></button>
            <i class="sep"></i>
            <button aria-label="Chamfer"><svg><use href="#chamfer"/></svg></button>
            <button aria-label="Fillet"><svg><use href="#fillet"/></svg></button>
            <i class="sep"></i>
            <button aria-label="Explode"><svg><use href="#bomb"/></svg></button>
            <button aria-label="Explode attributes"><svg><use href="#burst"/></svg></button>
            <span class="grip"></span>
            <button aria-label="Bring to front"><svg><use href="#front"/></svg></button>
            <button aria-label="Send to back"><svg><use href="#back"/></svg></button>
            <button aria-label="Bring above"><svg><use href="#above"/></svg></button>
            <button aria-label="Send under"><svg><use href="#under"/></svg></button>
            <button aria-label="Text to front"><svg viewBox="0 0 18 18"><path fill="#fff" d="M1.500 5.500h15v11h-15z"/><text class="glyph black" x="2" y="9">ABC</text></svg></button>
            <button aria-label="Dimensions to front"><svg><use href="#dimfront"/></svg></button>
            <button aria-label="Dimension block"><svg><use href="#dimblk"/></svg></button>
        </div>
    </div>

    <footer class="status">
        <span class="coords">527.3000,175.2000,0.0000</span>
        <div class="modes">
            <button>SNAP</button><button>GRID</button><button class="on">OSNAP</button><button class="on">OTRACK</button><button class="on">POLAR</button><button>ORTHO</button>
        </div>
        <div class="modes second"><button class="on">SW</button><button class="on">SH</button></div>
        <div class="modes views">
            <button class="space">MODEL</button>
            <button class="icon" aria-label="Lock viewport"><svg><use href="#locks"/></svg></button>
            <div class="viewport-list"><svg viewBox="0 0 14 14"><path fill="#eee" d="M1.500 1.500h10v9h-10z"/><path fill="#333" d="M6 9h7l-3.500 4z"/></svg><select aria-label="Viewport"><option></option></select><i class="arrow down"></i></div>
            <button class="icon" aria-label="Dynamic input"><svg><use href="#dynin"/></svg></button>
            <button class="icon" aria-label="Isolate"><svg><use href="#bulboff"/></svg></button>
            <button class="icon on" aria-label="Selection filter"><svg><use href="#nosel"/></svg></button>
            <button class="ratio-button">m1:1</button>
            <button class="icon" aria-label="Pan view"><svg><use href="#hand"/></svg></button>
            <button class="icon" aria-label="Zoom view"><svg><use href="#mag"/></svg></button>
            <button class="icon" aria-label="Zoom extents"><svg><use href="#zoomred"/></svg></button>
            <button class="icon" aria-label="Zoom sheet"><svg><use href="#zoomsheet"/></svg></button>
            <button class="icon" aria-label="Regenerate"><svg><use href="#regen"/></svg></button>
            <button class="icon" aria-label="Full screen"><svg><use href="#fullscr"/></svg></button>
        </div>
    </footer>
</body>
</html>
```
FILE: styles.css
```
/* Global */
* {
    box-sizing: border-box;
}
body {
    margin: 0;
    height: 100vh;
    display: flex;
    flex-direction: column;
    overflow: hidden;
    background: #505050;
    font-family: "DejaVu Sans Condensed", "Noto Sans", sans-serif;
    font-size: 11px;
    color: #111;
}
button, select, input {
    font: inherit;
    color: inherit;
    margin: 0;
    padding: 0;
    border: none;
    background: none;
    appearance: none;
    border-radius: 0;
}
svg {
    display: block;
    flex: none;
    width: 18px;
    height: 18px;
    fill: none;
    stroke: #414c54;
}
h1, h2, p {
    margin: 0;
    font-size: inherit;
    font-weight: normal;
}
.sprite {
    position: absolute;
    width: 0;
    height: 0;
}
.glyph {
    font: bold 9px "Liberation Sans", sans-serif;
    fill: #414c54;
    stroke: none;
}
.glyph.blue {
    fill: #2878b9;
}
.glyph.black {
    font-size: 7px;
    fill: #111;
}

/* Title bar */
.titlebar {
    display: flex;
    flex: none;
    height: 22px;
    border-bottom: 1px solid #b4b8c0;
    background:
        radial-gradient(circle at 260px 12px, #5d56a0 0, transparent 18px),
        radial-gradient(circle at 333px 14px, #7795b8 0, transparent 15px),
        linear-gradient(90deg, #6d7884 0, #8b939b 120px, #737b86 215px, #1d2536 290px, #141c2c 350px, #141c2c 88%, #5c6470 94%, #3c4450 100%);
}
.logo {
    width: 12px;
    height: 18px;
}
.titlebar h1 {
    flex: 1;
    padding-left: 6px;
    font: 12px/22px "Open Sans", "Noto Sans", sans-serif;
    color: #080c12;
    text-shadow: 0 0 5px #c9d0d8;
}
.window-buttons {
    display: flex;
    height: 18px;
    margin-right: 3px;
    border: 1px solid #c2c7cf;
    border-top: none;
    border-radius: 0 0 5px 5px;
    overflow: hidden;
}
.window-buttons button {
    width: 28px;
    display: flex;
    justify-content: center;
    align-items: center;
    background: linear-gradient(#8c939c 45%, #3f4650 50%, #59616c);
    border-right: 1px solid #c2c7cf;
}
.window-buttons svg {
    width: 12px;
    height: 12px;
}
.window-buttons .close {
    width: 46px;
    border: none;
    background: linear-gradient(#d9917c 45%, #b52e16 50%, #d4512c);
}

/* Menu */
.menu {
    display: flex;
    flex: none;
    height: 27px;
    padding-bottom: 3px;
    background: #525252;
    border-top: 1px solid #222938;
    color: #f2f2f2;
    font-family: "Open Sans", "Noto Sans", sans-serif;
}
.menu button {
    padding: 0 8px 0 7px;
}

/* Toolbars */
.toolbar {
    display: flex;
    flex: none;
    align-items: center;
    height: 24px;
    padding-top: 1px;
    border-bottom: 1px solid #626468;
    background: linear-gradient(#d0d2d5, #a9adb3);
}
.toolbar button, .side-toolbar button, .panel-tools button {
    flex: none;
    position: relative;
    width: 21px;
    height: 21px;
    display: flex;
    justify-content: center;
    align-items: center;
}
.toolbar .cut-off {
    width: 14px;
    overflow: hidden;
    justify-content: flex-start;
}
.toolbar .active, .panel-tools .active {
    background: #fbd590;
    border: 1px solid #c68f3c;
}
.fly::after {
    content: "";
    position: absolute;
    right: 0;
    bottom: 0;
    border: 2px solid transparent;
    border-right-color: #2b7dd0;
    border-bottom-color: #2b7dd0;
}
.grip {
    flex: none;
    width: 7px;
    height: 15px;
    align-self: center;
    background: repeating-linear-gradient(#333 0 2px, transparent 2px 4px) 2px 0 / 2px 100% no-repeat;
}
.menu .grip {
    background: repeating-linear-gradient(#ddd 0 2px, transparent 2px 4px) 2px 0 / 2px 100% no-repeat;
}
.grip.wide {
    width: 11px;
    background-position: 5px 0;
}
.sep {
    flex: none;
    width: 8px;
    height: 20px;
    background: linear-gradient(90deg, transparent 3px, #8b8f94 3px 4px, #fff 4px 5px, transparent 5px);
}
.edge {
    flex: none;
    width: 12px;
    height: 22px;
    background: linear-gradient(90deg, #fff 2px, #85888c 2px 3px, transparent 3px 4px, #fff 4px 6px, transparent 6px);
}
.edge.slim {
    width: 5px;
    background: linear-gradient(90deg, #c5c7ca 2px, #fff 2px 4px, #999 4px);
}
.tail {
    width: 10px;
}
.tail.short {
    width: 5px;
}
.combo {
    flex: 1 1 0;
    min-width: 0;
    display: flex;
    align-items: center;
    height: 22px;
    padding-left: 3px;
    background: #fff;
    border: 1px solid #666;
    border-right-color: #ddd;
}
.combo select {
    flex: 1;
    min-width: 0;
    height: 19px;
}
.combo.layer {
    flex: 5 1 12px;
}
.combo.color {
    flex-grow: 2;
}
.layer svg {
    width: 17px;
    height: 17px;
}
.combo .swatch, .cell .swatch {
    width: 12px;
    height: 12px;
    margin-right: 1px;
}
.stroke {
    width: 56px;
    height: 1px;
    margin: 0 1px 0 2px;
    background: #000;
}

/* Workspace */
.workspace {
    flex: 1;
    min-height: 0;
    display: flex;
}
.left {
    flex: 1;
    min-width: 0;
    display: flex;
    flex-direction: column;
}
.main {
    flex: 1;
    min-height: 0;
    display: flex;
    gap: 4px;
    border-bottom: 5px solid #505050;
    padding-top: 1px;
}

/* Properties */
.properties {
    width: 218px;
    flex: none;
    background: #fff;
    overflow: hidden;
    border-right: 1px solid #888;
}
.panel-title {
    display: flex;
    align-items: center;
    height: 19px;
    padding: 0 5px 0 1px;
    gap: 6px;
    background: #9b9b9b;
    color: #444;
}
.panel-title h2 {
    flex: 1;
}
.panel-title svg, .doc-tab svg, .command-side svg {
    width: 10px;
    height: 10px;
}
.panel-tools {
    display: flex;
    height: 22px;
    margin-left: -4px;
    align-items: center;
    background: linear-gradient(#d0d2d5, #a2a6ad);
}
.panel-tools .sep {
    width: 7px;
    height: 12px;
}
.properties table {
    width: 100%;
    border-collapse: separate;
    border-spacing: 0;
    table-layout: fixed;
}
.properties td {
    height: 22px;
    padding: 1px 0 0 6px;
    border-bottom: 1px solid #777;
    white-space: nowrap;
    overflow: hidden;
}
.properties td:first-child {
    width: 96px;
    border-right: 1px solid #777;
}
.properties td:last-child {
    width: 121px;
    padding-left: 2px;
}
.properties .type td:first-child {
    padding-left: 0;
}
.locked {
    background: #e3e3e3;
}
.group th {
    height: 20px;
    padding: 1px 0 0;
    text-align: left;
    background: linear-gradient(#c9cbcf, #9da1a8);
    border-bottom: 1px solid #777;
}
.group button {
    float: right;
    width: 9px;
    height: 9px;
    margin: 2px 4px 0 0;
    border: 1px solid #8092a8;
    background: linear-gradient(#34506e, #34506e) center / 5px 1px no-repeat #eef2f6;
}
.cell {
    display: flex;
    align-items: center;
    padding-left: 2px;
}
.cell svg {
    width: 16px;
    height: 16px;
    margin-right: 1px;
}

/* Drawing area */
.document {
    flex: 1;
    min-width: 0;
    display: flex;
    flex-direction: column;
}
.doc-tabs {
    display: flex;
    height: 20px;
    align-items: flex-end;
    justify-content: space-between;
    background: linear-gradient(#989da8, #ced0d5);
}
.doc-tab {
    display: flex;
    align-items: center;
    gap: 4px;
    height: 18px;
    padding: 0 4px 0 23px;
    background: #fff;
    font-weight: bold;
    clip-path: polygon(0 100%, 18px 0, 100% 0, 100% 100%);
}
.tab-list {
    padding: 7px 6px;
}
.frame {
    flex: 1;
    min-height: 0;
    display: flex;
    flex-direction: column;
    background: #fff;
    padding: 1px 3px 3px 2px;
}
.canvas {
    flex: 1;
    min-height: 0;
    width: 100%;
    height: auto;
    border-top: 1px solid #555;
    border-left: 1px solid #555;
    background: #212830;
}
.part {
    stroke: #b414b9;
    stroke-width: 1.5;
}
.dims {
    stroke: #b3b7ba;
}
.heads {
    fill: #212830;
    stroke: #d4d6d8;
}
.dim-text text {
    font: 200 18px "DejaVu Sans Light", "DejaVu Sans", sans-serif;
    fill: #b5babd;
    stroke: none;
}
.marker {
    fill: #c8c6c6;
    stroke: #a5a5a5;
}
.ucs {
    stroke: #f0f0f0;
}

/* Sheet tabs and scroll bar */
.sheet-bar {
    display: flex;
    height: 22px;
    padding-top: 2px;
    background: #f0f0f0;
    font: 12px "Liberation Sans", sans-serif;
}
.arrow {
    display: block;
    width: 0;
    height: 0;
    border: 4px solid transparent;
}
.left-arrow {
    border-width: 3px 4px 3px 0;
    border-right-color: #333;
}
.right-arrow {
    border-width: 3px 0 3px 4px;
    border-left-color: #333;
}
.down {
    border-width: 4px 4px 0;
    border-top-color: #444;
}
.up {
    border-width: 0 4px 4px;
    border-bottom-color: #444;
}
.step {
    width: 20px;
    height: 18px;
    padding-left: 10px;
}
.sheet {
    display: grid;
    height: 17px;
    width: 27px;
}
.sheet svg, .sheet span {
    grid-area: 1 / 1;
}
.sheet svg {
    width: 31px;
    height: 17px;
    overflow: visible;
}
.sheet span {
    line-height: 15px;
    padding-left: 1px;
}
.sheet.current {
    width: 48px;
    font-weight: bold;
}
.sheet.current svg {
    width: 51px;
    fill: #fff;
}
.sheet-space {
    flex: 340 1 0;
    display: flex;
    justify-content: flex-end;
    padding: 0 3px 2px 0;
    border-right: 2px solid #888;
}
.split {
    width: 18px;
    height: 16px;
    border: 1px solid #536273;
    border-radius: 2px;
    background: linear-gradient(#fff 4px, #3f8fc7 4px 7px, #fff 7px 10px, #557 10px 11px, #e4edf4 11px);
}
.scroll {
    flex: 574 1 0;
    display: flex;
    align-items: center;
    padding-left: 7px;
}
.track {
    flex: 1;
    display: flex;
    justify-content: flex-end;
    padding: 0 9px 2px;
}
.thumb {
    width: 68%;
    height: 16px;
    border: 1px solid #999;
    border-radius: 2px;
    background:
        repeating-linear-gradient(90deg, #555 0 1px, transparent 1px 3px) center / 8px 6px no-repeat,
        linear-gradient(#f5f5f5 45%, #d4d4d4 50%, #c9c9c9);
}
.resize {
    width: 14px;
    height: 14px;
    margin-left: 10px;
    align-self: flex-end;
}

/* Command line */
.command {
    flex: none;
    display: flex;
    height: 70px;
    background: #f0f0f0;
}
.command-side {
    width: 17px;
    display: flex;
    flex-direction: column;
    align-items: center;
    gap: 7px;
    padding: 5px 4px 0 0;
    overflow: hidden;
    background: #9b9b9b;
    color: #444;
    border-right: 1px solid #555;
}
.turned {
    transform: rotate(90deg);
}
.command-side span {
    writing-mode: vertical-rl;
    transform: rotate(180deg);
    line-height: 12px;
    font-size: 10px;
}
.command-body {
    flex: 1;
    display: flex;
    flex-direction: column;
    font: 12px/14px "DejaVu Sans Mono", monospace;
    color: #333;
}
.log {
    flex: 1;
    display: flex;
    justify-content: space-between;
    align-items: flex-end;
    border-top: 1px solid #777;
    border-bottom: 1px solid #777;
    padding-left: 1px;
}
.log-scroll {
    align-self: stretch;
    display: flex;
    flex-direction: column;
    justify-content: space-between;
    padding: 8px 5px;
}
.prompt {
    display: flex;
    height: 17px;
    align-items: center;
    background: #fff;
    color: #111;
}
.prompt input {
    flex: 1;
    padding-left: 4px;
}

/* Modify toolbar */
.side-toolbar {
    flex: none;
    display: flex;
    flex-direction: column;
    align-items: center;
    width: 25px;
    padding-right: 2px;
    overflow: hidden;
    border-left: 2px solid #626468;
    background: linear-gradient(90deg, #d0d2d5, #a5a9b0);
}
.side-toolbar .grip {
    width: 15px;
    height: 10px;
    background: repeating-linear-gradient(90deg, #333 0 2px, transparent 2px 4px) 0 4px / 100% 2px no-repeat;
}
.side-toolbar .sep {
    width: 21px;
    height: 8px;
    background: linear-gradient(transparent 3px, #8b8f94 3px 4px, #fff 4px 5px, transparent 5px);
}
.side-toolbar .ratio {
    font: bold 12px "Liberation Sans", sans-serif;
    color: #2c5a86;
}

/* Status bar */
.status {
    flex: none;
    display: flex;
    height: 21px;
    background: linear-gradient(#454952, #2a2b2d 50%, #303030);
    color: #f0f0f0;
}
.coords {
    width: 211px;
    line-height: 22px;
}
.modes {
    display: flex;
    gap: 1px;
    padding: 1px 1px 0;
    color: #111;
    background: #555;
}
.modes button {
    padding: 0 4px;
    background: linear-gradient(#fff 50%, #dfe3ea);
    border: 1px solid #aab0b8;
}
.modes .on {
    background: linear-gradient(#fde0ae, #f9bf61);
    border-color: #d39b48;
}
.second {
    margin-left: 3px;
    border-right: 1px solid #888;
    padding-right: 4px;
}
.views {
    margin-left: auto;
    padding-left: 6px;
    background: #888b90;
    flex: 0 1 452px;
}
.views button {
    flex: none;
}
.modes .space {
    padding: 0 1px;
}
.modes .icon {
    width: 21px;
    padding: 0;
    display: flex;
    justify-content: center;
    align-items: center;
}
.viewport-list {
    flex: 99 1 0;
    display: flex;
    align-items: center;
    background: linear-gradient(#fff 50%, #dfe3ea);
}
.viewport-list svg {
    width: 14px;
    height: 14px;
}
.viewport-list select {
    flex: 1;
    min-width: 0;
}
.modes .ratio-button {
    flex: 88 1 0;
}
```
